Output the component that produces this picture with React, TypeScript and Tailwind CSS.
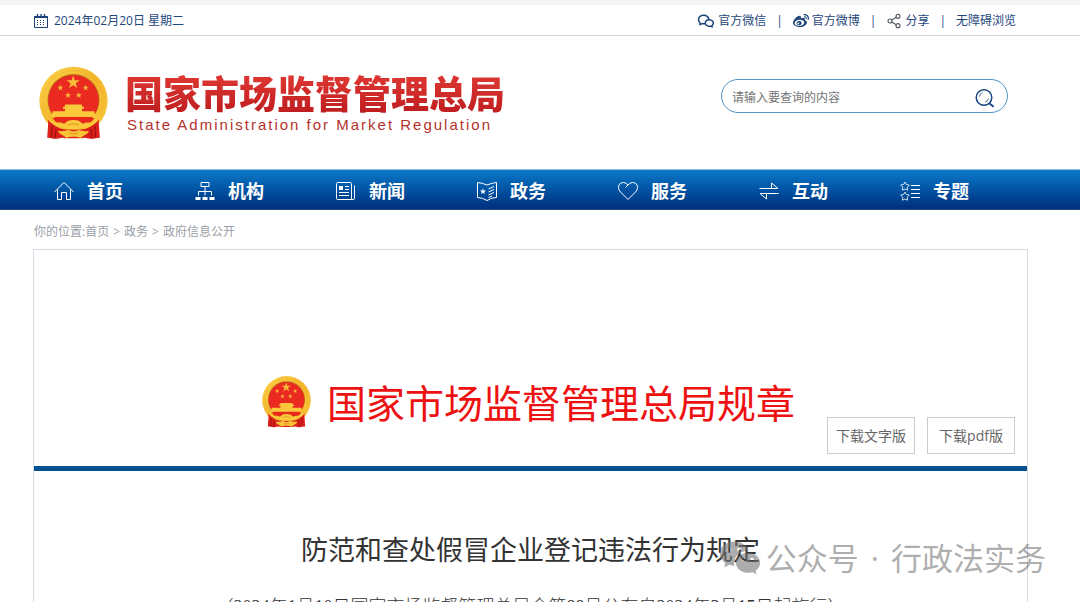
import React, { useState } from 'react';
import { Share2 } from 'lucide-react';
import { RiWechatLine, RiWechatFill } from 'react-icons/ri';
import { FaWeibo } from 'react-icons/fa';

const starPoints = (cx: number, cy: number, r: number) =>
  Array.from({ length: 10 }, (_, i) => {
    const radius = i % 2 === 0 ? r : r * 0.4;
    const angle = (Math.PI / 5) * i - Math.PI / 2;
    return `${(cx + radius * Math.cos(angle)).toFixed(1)},${(cy + radius * Math.sin(angle)).toFixed(1)}`;
  }).join(' ');

const Emblem = ({ className }: { className: string }) => (
  <svg viewBox="26 24 210 220" className={className} aria-hidden="true">
    <defs>
      <linearGradient id="emblem-gold" x1="0" y1="0" x2="1" y2="1">
        <stop offset="0" stopColor="#fbd34a" />
        <stop offset="0.5" stopColor="#f3b52b" />
        <stop offset="1" stopColor="#f9c93a" />
      </linearGradient>
    </defs>
    <circle cx="131" cy="129" r="104" fill="url(#emblem-gold)" />
    <circle cx="131" cy="129" r="92" fill="none" stroke="#dd9a1c" strokeWidth="4" strokeDasharray="5 7" opacity="0.3" />
    <circle cx="131" cy="126" r="79" fill="#b9791a" />
    <circle cx="131" cy="127" r="77" fill="#ea2a20" />
    <polygon points={starPoints(130, 73, 21)} fill="#f7b93a" />
    <polygon points={starPoints(91, 89, 10)} fill="#f7b93a" />
    <polygon points={starPoints(168, 89, 10)} fill="#f7b93a" />
    <polygon points={starPoints(114, 112, 10)} fill="#f7b93a" />
    <polygon points={starPoints(147, 112, 10)} fill="#f7b93a" />
    {/* gate tower */}
    <path d="M106 140h50l2 7h5v6h-6v8h37l5 17H63l5-17h37v-8h-6v-6h5z" fill="#fbc83c" />
    <path d="M67 181h128l-12 14c-15-1-25 0-34 3-5-10-31-10-36 0-12-4-22-5-34-3z" fill="#e8281d" />
    {/* silk and gear */}
    <path d="M54 180c10 22 30 34 54 38l-4 25c-10-4-16 2-27 1-8 1-15-3-26-3l3-44z" fill="#dc1f1a" />
    <path d="M208 180c-10 22-30 34-54 38l4 25c10-4 16 2 27 1 8 1 15-3 26-3l-3-44z" fill="#dc1f1a" />
    <path d="M66 205l-2 35M78 215l-3 27M196 205l2 35M184 215l3 27" stroke="#8e0d10" strokeWidth="3" />
    <path d="M89 216h84l-14 27h-56z" fill="#dc1f1a" />
    <path d="M48 172c14 20 36 30 57 26 8-14 44-14 52 0 21 4 43-6 57-26-4 20-26 36-53 38-8 8-52 8-60 0-27-2-49-18-53-38z" fill="#fbca3c" />
    <path d="M84 221c14 1 26-1 32-4 6 6 24 6 30 0 6 3 18 5 32 4-4 8-8 10-14 13l-12 8c-8-5-34-5-42 0l-12-8c-6-3-10-5-14-13z" fill="#f9c338" />
    <path d="M114 204c6-7 28-7 34 0M120 227c6 4 16 4 22 0" fill="none" stroke="#d88b18" strokeWidth="3" />
  </svg>
);

const CalendarIcon = () => (
  <svg viewBox="0 0 14 14" className="h-3.5 w-3.5" fill="none" stroke="#1d4478" aria-hidden="true">
    <path d="M0.5 2.5h13v11h-13z" />
    <path d="M0 3.2h14" strokeWidth="1.6" />
    <path d="M3.5 0v3M10.5 0v3M7 0v3" strokeWidth="1.4" />
    <path d="M3 6.5h9M3 8.5h9M3 10.5h9" strokeDasharray="1 2" />
  </svg>
);

const SearchIcon = () => (
  <svg viewBox="0 0 20 20" className="h-5 w-5" fill="none" stroke="#174680" aria-hidden="true">
    <circle cx="9" cy="9.5" r="7.8" strokeWidth="1.5" />
    <path d="M14.5 15.5l4.2 3.3" strokeWidth="1.9" />
    <path d="M4.5 8.5a5 5 0 0 1 3-4M13.6 10.5a5 5 0 0 1-3.5 3.6" strokeWidth="0.8" />
  </svg>
);

const navItems = [
  { label: '首页', icon: <path d="M.5 11 10 1.5l9.5 9.5M3.5 8.5v10h4v-7h5v7h4v-10" /> },
  {
    label: '机构',
    icon: (
      <>
        <path d="M6 1.5h8v4H6zM10 5.5v9M3.5 14.5v-4h13v4" />
        <path d="M.5 16h5v3h-5zM7.5 16h5v3h-5zM14.5 16h5v3h-5z" fill="currentColor" stroke="none" />
      </>
    ),
  },
  {
    label: '新闻',
    icon: (
      <>
        <path d="M1.5 1.5h13q1 0 1 1v16h-14q-1 0-1-1v-15q0-1 1-1zM15.5 18.5h2q1 0 1-1V4.5" />
        <path d="M3 5h4v4H3z" fill="currentColor" stroke="none" />
        <path d="M9 5.5h4M9 8.5h4M3 11.5h10M3 14.5h10" />
      </>
    ),
  },
  {
    label: '政务',
    icon: (
      <>
        <path d="M.5 1.5q5 .5 9.5 2.5 4.5-2 9.500-2.500v15q-5 0-9.500 3-4.500-3-9.500-3z" />
        <polygon points={starPoints(6, 10.5, 3.3)} fill="currentColor" stroke="none" />
        <path d="M11.5 8 17 5.5M11.5 11 17 8.5M11.5 14l5.5-2.5M11.5 16.5 15 15" />
      </>
    ),
  },
  {
    label: '服务',
    icon: <path d="M10 4q2-2.5 4.500-2.500 5 .3 5 5 0 2.500-2 4.500L10 18.500 2.500 11Q.5 9 .5 6.500q0-4.700 5-5Q8 1.500 10 4L7.500 6.500" />,
  },
  { label: '互动', icon: <path d="M.5 7.5h18.500L12.500 2v5M19.500 12.500H1L7.500 18v-5" /> },
  {
    label: '专题',
    icon: (
      <>
        <g strokeWidth="0.8">
          <polygon points="5,1 6.3,3.4 9.3,4 7.3,6.2 7.6,9.2 5,8 2.4,9.2 2.7,6.2 .7,4 3.7,3.4" />
          <polygon points="5,11 6.3,13.4 9.3,14 7.3,16.2 7.6,19.2 5,18 2.4,19.2 2.7,16.2 .7,14 3.7,13.4" />
        </g>
        <path d="M11 4.5h9M11 8.5h9M11 12.5h9M11 16.5h9" />
      </>
    ),
  },
];

const TopBar = () => (
  <div className="flex h-9 items-center justify-between border-t-[5px] border-b border-t-[#f5f5f5] border-b-[#d2d4d6] pt-0.5 pl-[34px] pr-16 text-xs text-[#1f477b]">
    <div className="flex items-center gap-1.5">
      <CalendarIcon />
      <span>2024年02月20日 星期二</span>
    </div>
    <div className="flex items-center gap-2.5">
      <a href="#wechat" className="flex items-center gap-[3px]">
        <RiWechatLine className="h-[18px] w-[18px]" />
        官方微信
      </a>
      <span>|</span>
      <a href="#weibo" className="flex items-center gap-[3px]">
        <FaWeibo className="h-4 w-4" />
        官方微博
      </a>
      <span>|</span>
      <a href="#share" className="flex items-center gap-[3px]">
        <Share2 className="h-4 w-4 text-[#555c66]" strokeWidth={1.7} />
        分享
      </a>
      <span>|</span>
      <a href="#accessible">无障碍浏览</a>
    </div>
  </div>
);

const Header = () => {
  const [query, setQuery] = useState('');

  return (
    <header className="flex items-start justify-between pt-[30px] pb-[30px] pl-[39px] pr-[72px]">
      <a href="#home" className="flex items-start gap-[17px]">
        <Emblem className="h-[73px] w-[69px]" />
        <div className="pt-[5px]">
          <div className="bg-gradient-to-b from-[#e23a35] to-[#bd1b1e] bg-clip-text text-[38px] leading-11 font-black whitespace-nowrap text-transparent">
            国家市场监督管理总局
          </div>
          <div className="pl-0.5 font-['Liberation_Sans'] text-[15px] leading-5 tracking-[2px] whitespace-nowrap text-[#b5322c]">
            State Administration for Market Regulation
          </div>
        </div>
      </a>
      <form
        className="mt-[13px] flex h-[34px] w-[287px] items-center rounded-full border border-[#4f93c0] pt-1 pl-2.5 pr-3"
        onSubmit={(e) => e.preventDefault()}
      >
        <input
          type="text"
          aria-label="搜索"
          placeholder="请输入要查询的内容"
          value={query}
          onChange={(e) => setQuery(e.target.value)}
          className="min-w-0 flex-1 text-xs outline-none placeholder:text-[#757575]"
        />
        <button type="submit" aria-label="查询">
          <SearchIcon />
        </button>
      </form>
    </header>
  );
};

const NavBar = () => (
  <nav className="grid h-[41px] grid-cols-7 border-t border-t-[#8cc3d8] border-b border-b-[#1b4a85] bg-gradient-to-b from-[#0f79ca] to-[#002f7d] pl-[34px] pr-[59px]">
    {navItems.map((item) => (
      <a key={item.label} href="#" className="flex items-center gap-[13px] pt-0.5 pl-5 text-lg font-bold text-white">
        <svg viewBox="0 0 20 20" className="h-5 w-5" fill="none" stroke="currentColor" strokeWidth="1" aria-hidden="true">
          {item.icon}
        </svg>
        {item.label}
      </a>
    ))}
  </nav>
);

const downloads = ['下载文字版', '下载pdf版'];

export default function App() {
  return (
    <div className="relative h-screen overflow-hidden bg-white font-['Open_Sans','Noto_Sans_CJK_SC',sans-serif]">
      <TopBar />
      <Header />
      <NavBar />

      <main className="pl-[33px] pr-[52px]">
        <div className="flex h-[39px] items-center gap-1 pt-1 pl-px text-xs text-[#9aa0a8]">
          <span>
            你的位置:<a href="#home">首页</a>
          </span>
          <span>&gt;</span>
          <a href="#affairs">政务</a>
          <span>&gt;</span>
          <a href="#info">政府信息公开</a>
        </div>

        <article className="border border-[#d5dbe2] pt-[125px]">
          <div className="flex items-start justify-end gap-8 border-b-[5px] border-[#03528f] pr-3 pb-3">
            <div className="flex items-start gap-4">
              <Emblem className="h-[53px] w-[49px]" />
              <h2 className="text-[39px] leading-[56px] whitespace-nowrap text-[#ee1111]">国家市场监督管理总局规章</h2>
            </div>
            <div className="flex gap-3 pt-[42px]">
              {downloads.map((label) => (
                <button key={label} className="h-[37px] w-[88px] border border-[#cccccc] text-sm whitespace-nowrap text-[#666666]">
                  {label}
                </button>
              ))}
            </div>
          </div>
          <div className="pt-[59px] text-center text-[#333333]">
            <h1 className="text-[27px] leading-10">防范和查处假冒企业登记违法行为规定</h1>
            <p className="mt-[25px] font-['Liberation_Serif','Noto_Sans_CJK_SC',serif] text-lg leading-6 font-light">
              （2024年1月10日国家市场监督管理总局令第88号公布自2024年3月15日起施行）
            </p>
          </div>
        </article>
      </main>

      <div className="pointer-events-none absolute right-[34px] bottom-[21px] flex items-center gap-1 text-[31px] leading-[46px] text-[#777777]/60">
        <RiWechatFill className="h-11 w-11" />
        <span>
          公众号 <span className="mx-1">·</span> 行政法实务
        </span>
      </div>
    </div>
  );
}
